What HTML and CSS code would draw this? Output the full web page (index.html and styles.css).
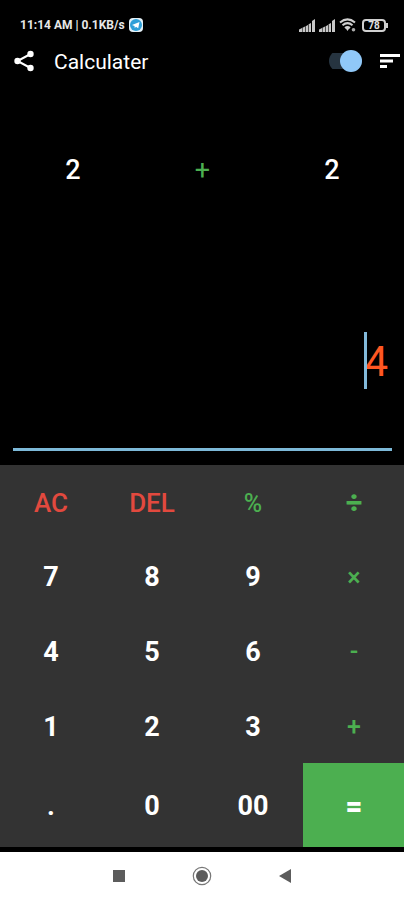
FILE: index.html
```html
<!DOCTYPE html>
<html lang="en">
<head>
<meta charset="utf-8">
<meta name="viewport" content="width=device-width, initial-scale=1">
<title>Calculater</title>
<link rel="stylesheet" href="styles.css">
</head>
<body>
<div class="screen">
  <div class="status">
    <span class="status-text">11:14 AM | 0.1KB/s</span>
    <svg class="telegram" width="14" height="14" viewBox="0 0 14 14" aria-hidden="true"><rect width="14" height="14" rx="4" fill="#e4f1f8"/><circle cx="7" cy="7" r="6" fill="#2d9fd8"/><path d="M3 7l7.500-3-1.300 6.300-2.200-1.500-1.200 1.200-.3-2z" fill="#fff"/></svg>
    <div class="status-icons">
      <svg width="17" height="13" viewBox="0 0 17 13" fill="#c8c8c8" aria-hidden="true"><path d="M0 10.500l3-1.500v4H0zM3.500 8.700l2.500-1.200V13H3.500zM6.600 7.200L9 6v7H6.600zM9.600 5.200L12 4v9H9.600zM13 2l3-2v13h-3z"/></svg>
      <svg width="17" height="13" viewBox="0 0 17 13" fill="#c8c8c8" aria-hidden="true"><path d="M0 10.500l3-1.500v4H0zM3.500 8.700l2.500-1.200V13H3.500zM6.600 7.200L9 6v7H6.600zM9.600 5.200L12 4v9H9.600zM13 2l3-2v13h-3z"/></svg>
      <svg width="18" height="14" viewBox="0 0 18 14" fill="none" stroke="#d0d0d0" stroke-width="2" aria-hidden="true"><path d="M1 4.500Q8.500-1.800 16 4.500M3.500 7.300Q8.500 3 13.500 7.300M6 10Q8.500 8 11 10"/><path d="M6.500 10h4l-2 3z" fill="#d0d0d0" stroke="none"/><circle cx="14.500" cy="11.800" r="1.800" fill="#aaa" stroke="none"/></svg>
      <span class="battery">78</span>
    </div>
  </div>
  <header class="bar">
    <button class="icon-button" type="button" aria-label="Share">
      <svg width="20" height="22" viewBox="0 0 20 22" fill="#fff" aria-hidden="true"><path d="M16.500 4L3.500 11l13 7" fill="none" stroke="#fff" stroke-width="2"/><circle cx="16.500" cy="4" r="3.200"/><circle cx="3.500" cy="11" r="3.200"/><circle cx="16.500" cy="18" r="3.200"/></svg>
    </button>
    <h1 class="title">Calculater</h1>
    <input class="switch" type="checkbox" role="switch" aria-label="Dark theme" checked>
    <button class="icon-button" type="button" aria-label="Menu">
      <svg width="20" height="14" viewBox="0 0 20 14" fill="#fff" aria-hidden="true"><path d="M0 0h20v3H0zM0 5.500h13v3H0zM0 11h7v3H0z"/></svg>
    </button>
  </header>
  <main class="main">
    <section class="display">
      <div class="operands">
        <span>2</span><span class="operator">+</span><span>2</span>
      </div>
      <div class="result">
        <input class="result-field" type="text" aria-label="Result" value="4" readonly>
        <span class="caret"></span>
      </div>
    </section>
    <section class="keypad">
      <button class="key clear" type="button">AC</button>
      <button class="key clear" type="button">DEL</button>
      <button class="key op" type="button">%</button>
      <button class="key op heavy" type="button">÷</button>
      <button class="key" type="button">7</button>
      <button class="key" type="button">8</button>
      <button class="key" type="button">9</button>
      <button class="key op" type="button">×</button>
      <button class="key" type="button">4</button>
      <button class="key" type="button">5</button>
      <button class="key" type="button">6</button>
      <button class="key op" type="button">-</button>
      <button class="key" type="button">1</button>
      <button class="key" type="button">2</button>
      <button class="key" type="button">3</button>
      <button class="key op" type="button">+</button>
      <button class="key" type="button">.</button>
      <button class="key" type="button">0</button>
      <button class="key" type="button">00</button>
      <button class="key equals heavy" type="button">=</button>
    </section>
  </main>
  <nav class="nav">
    <button class="icon-button" type="button" aria-label="Recent apps"><svg width="12" height="12" viewBox="0 0 12 12" aria-hidden="true"><path d="M0 0h12v12H0z" fill="#5c5c5c"/></svg></button>
    <button class="icon-button" type="button" aria-label="Home"><svg width="20" height="20" viewBox="0 0 20 20" aria-hidden="true"><circle cx="10" cy="10" r="8.700" fill="none" stroke="#777" stroke-width="1.200"/><circle cx="10" cy="10" r="6" fill="#5c5c5c"/></svg></button>
    <button class="icon-button" type="button" aria-label="Back"><svg width="12" height="14" viewBox="0 0 12 14" aria-hidden="true"><path d="M12 0v14L0 7z" fill="#5c5c5c"/></svg></button>
  </nav>
</div>
</body>
</html>
```
FILE: styles.css
```css
* {
  box-sizing: border-box;
}

body {
  margin: 0;
  background: #000;
  color: #fff;
  font-family: Roboto, "Liberation Sans", sans-serif;
}

button {
  margin: 0;
  padding: 0;
  border: 0;
  background: none;
  color: inherit;
  font: inherit;
}

svg {
  display: block;
}

.screen {
  display: flex;
  flex-direction: column;
  min-height: 100vh;
}

.status {
  display: flex;
  align-items: center;
  height: 40px;
  padding: 10px 16px 0 20px;
}

.status-text {
  font-size: 12px;
  font-weight: 700;
  color: #e8e8e8;
}

.telegram {
  margin-left: 4px;
}

.status-icons {
  display: flex;
  align-items: center;
  gap: 3px;
  margin-left: auto;
}

.battery {
  position: relative;
  width: 24px;
  height: 13px;
  margin: 0 2px;
  border: 2px solid #d0d0d0;
  border-radius: 4px;
  color: #e0e0e0;
  font-size: 10px;
  font-weight: 700;
  line-height: 10px;
  text-align: center;
}

.battery::after {
  content: "";
  position: absolute;
  top: 2px;
  right: -4px;
  width: 2px;
  height: 5px;
  background: #d0d0d0;
}

.bar {
  display: flex;
  align-items: center;
  height: 42px;
  padding: 0 4px 0 14px;
}

.icon-button {
  display: flex;
  align-items: center;
  justify-content: center;
}

.title {
  flex: 1;
  margin: 2px 0 0 20px;
  font-size: 21px;
  font-weight: 400;
  line-height: 28px;
}

.switch {
  appearance: none;
  display: flex;
  align-items: center;
  justify-content: flex-end;
  width: 33px;
  height: 22px;
  margin: 0 18px 0 0;
  background: linear-gradient(#263440, #263440) center / 100% 16px no-repeat;
  border-radius: 11px;
}

.switch::before {
  content: "";
  width: 22px;
  height: 22px;
  border-radius: 50%;
  background: #90c8f8;
}

.main {
  flex: 1;
  display: flex;
  flex-direction: column;
}

.display {
  flex: 1;
  display: flex;
  flex-direction: column;
  justify-content: space-between;
  padding: 72px 12px 14px 13px;
}

.operands {
  display: grid;
  grid-template-columns: 120px 1fr 120px;
  font-size: 27px;
  font-weight: 500;
  line-height: 32px;
  text-align: center;
}

.operator {
  color: #4caf50;
  font-weight: 400;
}

.result {
  position: relative;
}

.result-field {
  display: block;
  width: 100%;
  height: 180px;
  padding: 4px 4px 0;
  border: 0;
  border-bottom: 3px solid #7db9d8;
  outline: 0;
  background: none;
  color: #ff5722;
  font-family: inherit;
  font-size: 42px;
  text-align: right;
}

.caret {
  position: absolute;
  top: 61px;
  right: 25px;
  width: 3px;
  height: 57px;
  background: #82b9da;
}

.keypad {
  display: grid;
  grid-template-columns: repeat(4, 1fr);
  grid-template-rows: 74px 74px 75px 75px 84px;
  background: #333;
}

.key {
  padding: 2px 0 0 1px;
  font-size: 27px;
  font-weight: 700;
}

.clear {
  color: #e2493e;
  font-size: 26px;
  font-weight: 500;
}

.op {
  color: #4caf50;
  font-size: 25px;
  font-weight: 500;
}

.equals {
  background: #4caf50;
  color: #fff;
}

.heavy {
  font-size: 29px;
  font-weight: 900;
}

.nav {
  display: flex;
  align-items: center;
  justify-content: center;
  gap: 67px;
  height: 53px;
  border-top: 5px solid #000;
  background: #fff;
}
```
